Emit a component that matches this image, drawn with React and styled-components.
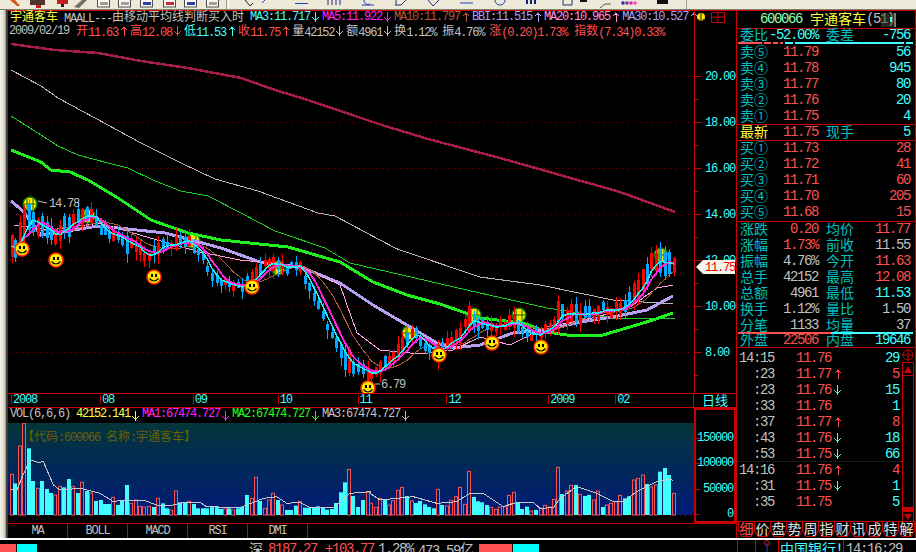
import React from "react";
import styled, { createGlobalStyle } from "styled-components";

const RED = "#c80000";
const UP = "#ff5050";
const CYAN = "#40ffff";
const TEAL = "#00c0c0";
const GRAY = "#c0c0c0";

const GlobalStyle = createGlobalStyle`
  html, body { margin: 0; padding: 0; background: #000; }
  body { width: 916px; height: 552px; overflow: hidden; }
  svg { display: block; }
`;

// ascii is squeezed to the 1:2 cell of the old bitmap font, han keeps full width
const Han = styled.span`
  font-family: "Noto Sans CJK SC", sans-serif;
  letter-spacing: 0;
  position: relative;
  top: -1px;
`;
const Mix = ({ children }) =>
  String(children)
    .split(/([\u2460-\u2473\u4e00-\u9fff\uff01]+)/)
    .map((part, i) => (i % 2 ? <Han key={i}>{part}</Han> : part));

const Page = styled.div`
  width: 916px;
  height: 552px;
  overflow: hidden;
  background: #000;
  font-family: "Liberation Mono", monospace;
  letter-spacing: -1.2px;
  white-space: pre;
`;

const Main = styled.div`
  display: flex;
  height: 528px;
`;

const Rail = styled.div`
  width: 6px;
  background: linear-gradient(90deg, #f4f2e6, #dcd8c4 70%, #8a8878);
  border-right: 1px solid #404040;
`;

const ChartColumn = styled.div`
  width: 728px;
  border-left: 1px solid ${RED};
  border-top: 1px solid ${RED};
`;

const Header = styled.div`
  display: flex;
  height: 28px;
  font-size: 12px;
`;
const HeaderBody = styled.div`
  width: 686px;
`;
const HeaderRow = styled.div`
  display: flex;
  height: ${(p) => p.$h}px;
  line-height: ${(p) => p.$h}px;
  padding-left: ${(p) => p.$pad}px;
`;
const Item = styled.span`
  color: ${(p) => p.$c};
  margin-right: ${(p) => p.$mr || 0}px;
`;
const HeaderTools = styled.div`
  flex: 1;
  border-left: 1px solid ${RED};
  display: flex;
  gap: 3px;
  padding-top: 1px;
`;

const ArrowBox = styled.svg`
  width: 12px;
  height: 12px;
  flex: none;
  color: ${(p) => p.$c};
  align-self: center;
`;
const Arrow = ({ up, c }) => (
  <ArrowBox $c={c} viewBox="0 0 12 12">
    {up ? (
      <path d="M5 1h1v1h1v1h1v1h1v1h-1v-1h-1v7h-1v-7h-1v-0h-1v1h-1v-1h1v-1h1v-1h1z" fill="currentColor" />
    ) : (
      <path d="M5 1h1v7h1v-1h1v-1h1v1h-1v1h-1v1h-1v2h-1v-2h-1v-1h-1v-1h-1v-1h1v1h1v1h1z" fill="currentColor" />
    )}
  </ArrowBox>
);

const PriceCanvas = styled.svg`
  width: 728px;
  height: 354px;
  font-size: 12px;
  letter-spacing: -1.2px;
`;

const DateAxis = styled.div`
  display: flex;
  height: 15px;
  box-sizing: border-box;
  border-top: 1px solid ${RED};
  border-bottom: 1px solid ${RED};
`;
const DateSpacer = styled.div`
  width: 3px;
`;
const DateCell = styled.div`
  width: ${(p) => p.$w}px;
  height: 9px;
  box-sizing: border-box;
  border-left: 1px solid ${RED};
  padding-left: 1px;
  margin-top: 1px;
  font-size: 12px;
  line-height: 11px;
  color: ${CYAN};
`;
const AxisCaption = styled.div`
  width: 42px;
  border-left: 1px solid ${RED};
  text-align: center;
  color: ${CYAN};
  font-size: 13px;
  line-height: 14px;
`;

const LowerRow = styled.div`
  display: flex;
  height: 115px;
`;
const VolumeColumn = styled.div`
  width: 686px;
`;
const VolumeHeader = styled.div`
  display: flex;
  height: 15px;
  line-height: 13px;
  font-size: 12px;
  padding-left: 2px;
`;
const VolumeCanvas = styled.svg`
  width: 686px;
  height: 100px;
`;
const VolumeAxis = styled.div`
  width: 42px;
  box-sizing: border-box;
  height: 115px;
  border: 2px solid ${RED};
  padding-top: 16px;
`;
const VolumeTick = styled.div`
  position: relative;
  height: 25.3px;
  line-height: 25px;
  text-align: right;
  padding-right: 1px;
  font-size: 12px;
  color: ${CYAN};
  &::before {
    content: "";
    position: absolute;
    left: 0;
    top: 12px;
    width: 4px;
    height: 1px;
    background: ${RED};
  }
`;

const TabRow = styled.div`
  display: flex;
  height: 15px;
  box-sizing: border-box;
  border-top: 1px solid ${RED};
`;
const FormulaTab = styled.div`
  width: ${(p) => p.$w}px;
  box-sizing: border-box;
  border-right: 1px solid ${RED};
  text-align: center;
  font-size: 12px;
  line-height: 14px;
  color: ${GRAY};
`;

const Panel = styled.div`
  width: 178px;
  border-left: 1px solid ${RED};
  border-right: 1px solid ${RED};
  border-top: 1px solid ${RED};
  font-size: 14px;
  letter-spacing: -1.4px;
`;
const Title = styled.div`
  display: flex;
  height: 18px;
  box-sizing: border-box;
  border-bottom: 1px solid ${RED};
  padding-left: 23px;
  line-height: 17px;
  position: relative;
`;
const TitleBadge = styled.div`
  position: absolute;
  left: 144px;
  top: 2px;
  width: 15px;
  height: 14px;
  box-sizing: border-box;
  background: rgba(70, 70, 50, 0.55);
  border-right: 2px solid #807868;
  &::after {
    content: "";
    position: absolute;
    right: 2px;
    top: 4px;
    width: 2px;
    height: 5px;
    background: ${CYAN};
  }
`;
const Section = styled.div`
  border-bottom: 1px solid ${RED};
`;
const Row = styled.div`
  display: grid;
  grid-template-columns: 28px 50px 8px 28px 1fr;
  height: ${(p) => p.$h || 16}px;
  line-height: ${(p) => p.$lh || p.$h || 16}px;
  padding: 0 5px 0 3px;
`;
const Cell = styled.span`
  color: ${(p) => p.$c || TEAL};
  text-align: ${(p) => (p.$r ? "right" : "left")};
  grid-column: ${(p) => p.$col};
`;
const BarRow = styled.div`
  display: flex;
  gap: ${(p) => p.$gap || 0}px;
  height: 2px;
  margin: ${(p) => p.$mt || 0}px 2px 0 1px;
  position: relative;
`;
const BarPiece = styled.div`
  width: ${(p) => p.$w}px;
  background: ${(p) => p.$c};
`;

const Trades = styled.div`
  display: flex;
  height: 174px;
  box-sizing: border-box;
  border-bottom: 1px solid ${RED};
`;
const TradeRows = styled.div`
  width: 165px;
  padding-top: 2px;
`;
const TradeRow = styled.div`
  display: grid;
  grid-template-columns: 37px 22px 35px 14px 1fr;
  height: 16px;
  line-height: 16px;
  padding-right: 3px;
  box-sizing: border-box;
  border-bottom: ${(p) => (p.$split ? "1px dotted #a00000" : "none")};
`;
const TradeTime = styled.span`
  color: ${GRAY};
  text-align: right;
`;
const TradePrice = styled.span`
  color: ${UP};
  grid-column: 3;
`;
const TradeArrow = styled.span`
  grid-column: 4;
  display: flex;
  justify-content: center;
`;
const TradeVol = styled.span`
  color: ${(p) => p.$c};
  text-align: right;
  grid-column: 5;
`;
const Scroller = styled.div`
  width: 12px;
  display: flex;
  flex-direction: column;
  padding-top: 1px;
  box-sizing: border-box;
`;
const ScrollTrack = styled.div`
  flex: 1;
  border-left: 1px solid ${RED};
  border-right: 1px solid ${RED};
  border-bottom: 5px solid ${RED};
`;
const ScrollButton = styled.div`
  height: ${(p) => p.$h}px;
  box-sizing: border-box;
  border: 1px solid ${RED};
  border-width: ${(p) => (p.$bottom ? "0 1px 0 1px" : "1px")};
  display: flex;
  align-items: center;
  justify-content: center;
`;

const ChipRow = styled.div`
  display: flex;
  height: 15px;
  padding-left: 1px;
`;
const HEX = "polygon(0 0, 100% 0, 100% 55%, 78% 100%, 22% 100%, 0 55%)";
const Chip = styled.div`
  position: relative;
  width: 17px;
  height: 15px;
  margin-right: -1px;
  background: ${RED};
  clip-path: ${HEX};
  &::before {
    content: "";
    position: absolute;
    inset: 0 1px 1px;
    background: #000;
    clip-path: ${HEX};
  }
`;
const ChipText = styled.span`
  position: relative;
  display: block;
  text-align: center;
  font-size: 14px;
  line-height: 15px;
  color: ${(p) => (p.$on ? UP : "#e0e0e0")};
`;

const WhiteLine = styled.div`
  height: 2px;
  background: #fff;
`;
const StatusBar = styled.div`
  display: flex;
  height: 12px;
  overflow: hidden;
  font-size: 14px;
  line-height: 18px;
  letter-spacing: -1.4px;
`;
const StatusBlock = styled.div`
  width: ${(p) => p.$w}px;
  height: 8px;
  margin: 4px 0 0 ${(p) => p.$ml || 0}px;
  background: ${(p) => p.$c};
`;
const StatusText = styled.span`
  color: ${(p) => p.$c};
  margin-left: ${(p) => p.$ml || 0}px;
`;
const StatusRight = styled.div`
  display: flex;
  margin-left: auto;
  width: 179px;
`;
const StatusCell = styled.div`
  width: ${(p) => p.$w}px;
  box-sizing: border-box;
  border-left: 1px solid ${RED};
  padding-left: ${(p) => p.$pad || 0}px;
  color: ${(p) => p.$c};
  display: flex;
  justify-content: ${(p) => (p.$center ? "center" : "flex-start")};
`;

// one candle per volume bar, x is absolute page px (zoomed reading / 3)
const V1 =
  "35r268 46c295 61r183 73r115 88c190 100c288 115r310 127c288 142c312 154c324 166r330 181r304 193c307 208c282 220r304 235c324 247r292 262c318 274r324 289c348 302c345 314c357 328c357 340r337 355c360 367c345 382c300 394r355 409r345 421r364 433r366 448r364 462c366 475r340 488c355 502c370 514r375 529r318 541c352 555c352 568r349 581c357 595c370 608c370 622c370 635c364 650c364 662c372 675r372 688c370 700r375 715c370 727c365 742c330 755r340 769r277 781c348 796r370 808r345 820r325 835c345 847r360 860c375 874c375 889c362 901r349 914c368 928c368 942c368 955c364 968c368 982c374 996c372 1009c354 1022c322 1036c292 1048r253 1060c333 1075c366 1088c345 1103r322";
const V2 =
  "2r355 18r367 30r340 46c345 58r360 70r347 85r316 97r307 112c333 125r348 139c354 151c348 165c358 178c366 192c370 205r313 217c360 232r363 244r346 259r335 271r307 286r358 298r259 313c336 325c349 337c352 352c360 364r367 379r373 391r366 405r365 418r331 433r322 445c352 457c372 471c365 484r378 499c375 512r370 526r361 539r366 553r343 565r247 577c327 592r318 604r301 619c300 631r328 646c333 658c330 673r345 685r318 700c366 712r360 724r355 737r350 751r331 766c340 778c334 793r285 805r280 820r270 832c297 844r306 859r300 871c260 886c249 898c270 913r325";

const parseBars = (src, offset) =>
  src.split(" ").map((s) => {
    const m = s.match(/(\d+)([rc])(\d+)/);
    return { x: +m[1] / 3 + offset, up: m[2] === "r", h: (390 - +m[3]) / 3 };
  });
const bars = [...parseBars(V1, 0), ...parseBars(V2, 370)];

const TRACK = [
  [12, 250], [20, 240], [26, 215], [36, 225], [44, 230], [56, 235], [66, 225], [80, 215], [92, 215],
  [100, 228], [112, 235], [128, 245], [140, 252], [150, 255], [160, 248], [176, 240], [190, 240],
  [200, 255], [215, 280], [235, 290], [250, 280], [265, 265], [280, 268], [300, 270], [310, 290],
  [320, 310], [335, 345], [345, 360], [360, 372], [375, 375], [385, 365], [400, 350], [410, 330],
  [425, 345], [440, 350], [455, 340], [470, 320], [485, 325], [500, 325], [515, 325], [530, 335],
  [545, 330], [560, 315], [580, 315], [600, 310], [615, 310], [630, 300], [640, 285], [650, 265],
  [660, 258], [675, 265],
];
const at = (x) => {
  for (let i = 1; i < TRACK.length; i++) {
    if (x <= TRACK[i][0]) {
      const [x0, y0] = TRACK[i - 1];
      const [x1, y1] = TRACK[i];
      return y0 + ((y1 - y0) * (x - x0)) / (x1 - x0);
    }
  }
  return TRACK[TRACK.length - 1][1];
};
const noise = (i) => {
  const v = Math.sin(i * 12.9898) * 43758.5453;
  return v - Math.floor(v);
};
const candles = bars.map((b, i) => {
  const mid = Math.round(at(b.x) + (noise(i) - 0.5) * 8);
  const half = Math.round(Math.min(2 + b.h / 4.5, 13));
  return {
    ...b,
    top: mid - half,
    bottom: mid + half,
    high: mid - half - Math.round(noise(i + 300) * 8),
    low: mid + half + Math.round(noise(i + 600) * 9),
    mid,
  };
});
const movingAvg = (n) =>
  candles
    .map((c, i) => {
      const from = Math.max(0, i - n + 1);
      const part = candles.slice(from, i + 1);
      return `${c.x.toFixed(1)},${(part.reduce((s, p) => s + p.mid, 0) / part.length).toFixed(1)}`;
    })
    .join(" ");

const LINES = [
  { c: "#a81c48", w: 2.5, p: "11,44 55,50 98,53 141,61 188,68 241,78 275,90 308,100 355,116 385,126 428,139 500,158 560,175 620,192 675,212" },
  { c: "#b8b8b8", w: 1, p: "11,70 41,86 58,98 95,118 141,143 181,163 215,179 258,191 318,213 335,216 395,248 400,250 480,277 540,285 613,300 673,304" },
  { c: "#20d020", w: 1, p: "11,116 41,135 58,146 78,155 108,163 128,168 155,181 181,191 208,196 241,213 275,231 325,248 350,263 480,293 547,308 613,318 675,318" },
  { c: "#20f020", w: 3, p: "11,150 41,162 51,170 70,172 88,180 118,198 151,220 188,233 221,240 288,247 340,262 373,282 407,295 440,304 480,318 523,323 547,332 567,335 603,335 630,327 653,320 673,313" },
  { c: "#b8a0f0", w: 3, p: "11,201 23,211 41,235 68,231 98,226 128,229 165,233 221,248 260,262 303,268 340,283 373,305 407,325 437,343 453,348 480,345 513,333 547,330 580,322 613,317 647,310 673,296" },
  { c: "#ffa0e0", w: 1, p: "14,225 50,230 100,223 150,238 200,252 240,260 300,266 340,285 357,333 380,350 420,354 453,350 480,337 510,345 547,327 597,317 630,307 657,288 673,285" },
];

const Smiley = ({ x, y, sell }) => (
  <g transform={`translate(${x} ${y})`}>
    <circle r="7" fill="#ffe800" stroke={sell ? "#0a6a0a" : "#ff2800"} strokeWidth="1.5" />
    {sell ? (
      <path d="M-3-5V5M3-5V5M-6 0H6" stroke="#0a6a0a" fill="none" />
    ) : (
      <>
        <rect x="-3" y="-3" width="2" height="3" fill="#000" />
        <rect x="1" y="-3" width="2" height="3" fill="#000" />
        <path d="M-4.5 1.5Q0 6.5 4.5 1.5" stroke="#000" strokeWidth="1.2" fill="none" />
      </>
    )}
  </g>
);

const SELLS = [[30, 204], [88, 216], [193, 241], [278, 268], [409, 333], [474, 315], [519, 315], [661, 255]];
const BUYS = [[22, 249], [56, 260], [154, 277], [252, 287], [368, 388], [439, 355], [492, 343], [541, 347]];

const VOL_MA_1 = "33,312 50,318 65,280 90,225 115,232 130,230 160,300 180,315 240,310 300,325 340,350 370,345 430,345 470,360 520,360 550,352 600,352 620,365 720,368 790,340 830,335 860,355 900,352 930,368 1000,368 1050,325 1110,320";
const VOL_MA_2 = "0,325 30,345 130,335 200,355 260,350 300,325 340,325 400,365 440,352 490,352 510,370 550,368 570,340 620,305 680,325 730,350 760,350 800,320 860,290 900,283 910,287";
const volMa = [VOL_MA_1, VOL_MA_2]
  .map((src, k) =>
    src
      .split(" ")
      .map((pt) => {
        const [x, y] = pt.split(",").map(Number);
        return `${x / 3 + (k ? 370 : 0)},${y / 3 + 385}`;
      })
      .join(" ")
  )
  .join(" ");

const PriceChart = () => (
  <PriceCanvas viewBox="8 39 728 354" fontFamily="Liberation Mono">
    {[76, 122, 168, 214, 260, 306, 352].map((y) => (
      <line key={y} x1="10" x2="694" y1={y + 0.5} y2={y + 0.5} stroke="#900000" strokeDasharray="1 5" />
    ))}
    <line x1="694.5" x2="694.5" y1="39" y2="393" stroke={RED} />
    {[20, 18, 16, 14, 12, 10, 8].map((v, i) => {
      const y = 76 + i * 46;
      return (
        <g key={v}>
          <line x1="694" x2="702" y1={y + 0.5} y2={y + 0.5} stroke={RED} />
          <line x1="694" x2="698" y1={y + 23.5} y2={y + 23.5} stroke={RED} />
          <text x="705" y={y + 4} fill={CYAN}>{v.toFixed(2)}</text>
        </g>
      );
    })}
    {SELLS.map(([x, y]) => <Smiley key={x} x={x} y={y} sell />)}
    {LINES.map((l) => (
      <polyline key={l.c} points={l.p} fill="none" stroke={l.c} strokeWidth={l.w} shapeRendering="crispEdges" />
    ))}
    <polyline points={movingAvg(10)} fill="none" stroke="#b05a3a" shapeRendering="crispEdges" />
    {candles.filter((c) => c.x < 676).map((c, i) => (
      <g key={i} fill={c.up ? "#ff0000" : "#00a8ff"}>
        <rect x={Math.round(c.x)} y={c.high} width="1" height={c.low - c.high} />
        <rect x={Math.round(c.x) - 1} y={c.top} width="3" height={c.bottom - c.top} />
      </g>
    ))}
    <polyline points={movingAvg(5)} fill="none" stroke="#ff20e0" strokeWidth="2" shapeRendering="crispEdges" />
    <polyline points={movingAvg(3)} fill="none" stroke="#20f0f0" strokeWidth="1.5" shapeRendering="crispEdges" />
    {BUYS.map(([x, y]) => <Smiley key={x} x={x} y={y} />)}
    <line x1="38" x2="47" y1="201" y2="203" stroke="#c0c0c0" />
    <text x="49" y="207" fill={GRAY}>14.78</text>
    <line x1="375" x2="380" y1="384" y2="384" stroke="#c0c0c0" />
    <text x="381" y="388" fill={GRAY}>6.79</text>
    <path d="M735 260H703L696 267L703 274H735Z" fill="#f4f4e8" />
    <text x="705" y="271" fill="#f00000">11.75</text>
  </PriceCanvas>
);

const VolumeChart = () => (
  <VolumeCanvas viewBox="8 423 686 100">
    <defs>
      <linearGradient id="volBg" x1="0" x2="0" y1="0" y2="1">
        <stop offset="0" stopColor="#04363a" />
        <stop offset="1" stopColor="#001a78" />
      </linearGradient>
    </defs>
    <rect x="8" y="423" width="686" height="92" fill="url(#volBg)" />
    {candles.map((b, i) =>
      b.up ? (
        <rect key={i} x={Math.round(b.x) - 1.5} y={515 - b.h} width="3" height={b.h} fill="none" stroke="#ff5050" />
      ) : (
        <rect key={i} x={Math.round(b.x) - 2} y={515 - b.h} width="4" height={b.h} fill="#40ffff" />
      )
    )}
    <polyline points={volMa} fill="none" stroke="#c8c8c8" shapeRendering="crispEdges" />
    <text x="22" y="441" fill="#6b6000" fontSize="12" fontFamily="Liberation Mono" letterSpacing="-1.2">
      <tspan fontFamily="Noto Sans CJK SC" letterSpacing="0">【代码</tspan>:600066 <tspan fontFamily="Noto Sans CJK SC" letterSpacing="0">名称</tspan>:<tspan fontFamily="Noto Sans CJK SC" letterSpacing="0">宇通客车】</tspan>
    </text>
    <line x1="670" x2="694" y1="515.5" y2="515.5" stroke="#a00000" strokeDasharray="1 4" />
  </VolumeCanvas>
);

const Toolbar = () => (
  <svg width="916" height="10" viewBox="0 0 916 10">
    <rect width="916" height="10" fill="#ece9d8" />
    <rect y="9" width="916" height="1" fill="#808070" />
    <path d="M10 0h5l5 6h-3z" fill="#d05818" />
    <rect x="30" y="0" width="15" height="5" fill="#503030" />
    <rect x="36" y="5" width="5" height="3" fill="#c02020" />
    <rect x="57" y="0" width="11" height="4" fill="#c02020" />
    <rect x="61" y="4" width="3" height="3" fill="#202020" />
    <path d="M74 7L82 0h5l-8 8z" fill="#707068" />
    {[97, 118, 140, 163, 184, 206].map((x) => (
      <g key={x}>
        <rect x={x + 0.5} y="-2" width="12" height="9" fill="#f8f8f0" stroke="#505050" />
        <rect x={x + 3} y="2" width="8" height="3" fill={x === 163 ? "#c03030" : x === 140 || x === 184 ? "#3040a0" : "#a0a098"} />
      </g>
    ))}
    <rect x="226" y="0" width="1" height="9" fill="#a0a090" />
    <rect x="228" y="0" width="1" height="9" fill="#fff" />
    <path d="M245 0l5 6 3-3" stroke="#202020" fill="none" />
    <path d="M262 3l3-3" stroke="#2040c0" fill="none" />
    <rect x="295" y="3" width="13" height="1" fill="#2040c0" />
    <path d="M328 0v5M332 0v5M336 0v5M340 0v5" stroke="#203080" />
    <path d="M362 5h12M364 0a4 4 0 0 0 6 4" stroke="#2040c0" fill="none" />
    <path d="M395 5h6l5-5M396 0v5" stroke="#203080" fill="none" />
    <path d="M428 0l5 6 6-6" stroke="#203080" fill="none" />
    <path d="M460 3h13" stroke="#2040c0" />
    <circle cx="500" cy="0" r="5" fill="none" stroke="#2040c0" />
    <path d="M527 0v4M531 0v4M535 0v4" stroke="#102070" strokeWidth="2" />
    <path d="M563 0v5h9V0" stroke="#203080" fill="none" />
    <rect x="580" y="0" width="7" height="2" fill="#101010" />
    <path d="M600 8l5-4h6" stroke="#406040" fill="none" />
    {[623, 627, 631, 635].map((x, i) => (
      <circle key={x} cx={x} cy="3" r="1.8" fill={["#2030a0", "#8030a0", "#d030b0", "#ff40c0"][i]} />
    ))}
    <rect x="657" y="0" width="11" height="4" fill="#101010" />
    <rect x="686" y="0" width="1" height="9" fill="#a0a090" />
  </svg>
);

const SELL_LEVELS = [
  ["卖⑤", "11.79", "56"], ["卖④", "11.78", "945"], ["卖③", "11.77", "80"], ["卖②", "11.76", "20"], ["卖①", "11.75", "4"],
];
const BUY_LEVELS = [
  ["买①", "11.73", "28"], ["买②", "11.72", "41"], ["买③", "11.71", "60"], ["买④", "11.70", "205"], ["买⑤", "11.68", "15"],
];
const STATS = [
  ["涨跌", "0.20", UP, "均价", "11.77", UP],
  ["涨幅", "1.73%", UP, "前收", "11.55", GRAY],
  ["振幅", "4.76%", GRAY, "今开", "11.63", UP],
  ["总手", "42152", GRAY, "最高", "12.08", UP],
  ["总额", "4961", GRAY, "最低", "11.53", CYAN],
  ["换手", "1.12%", GRAY, "量比", "1.50", GRAY],
  ["分笔", "1133", GRAY, "均量", "37", GRAY],
];
const TICKS = [
  ["14:15", "11.76", null, "29", CYAN],
  [":23", "11.77", "up", "5", UP],
  [":23", "11.76", "down", "15", CYAN],
  [":33", "11.76", null, "1", CYAN],
  [":37", "11.77", "up", "8", UP],
  [":43", "11.76", "down", "18", CYAN],
  [":53", "11.75", "down", "66", CYAN],
  ["14:16", "11.76", "up", "4", UP],
  [":31", "11.75", "down", "1", CYAN],
  [":35", "11.75", null, "5", CYAN],
];
const DATES = [["2008", 89], ["08", 93], ["09", 85], ["10", 80], ["11", 89], ["12", 102], ["2009", 67], ["02", 78]];
const FORMULAS = [["MA", 60], ["BOLL", 60], ["MACD", 60], ["RSI", 60], ["DMI", 60]];
const CHIPS = ["细", "价", "盘", "势", "周", "指", "财", "讯", "成", "特", "解"];
const RATIO_BAR = [[24, UP], [7, UP], [5, UP], [3, UP], [9, CYAN], [110, CYAN], [7, CYAN]];

const Level = ({ row, volColor, lh }) => (
  <Row $lh={lh}>
    <Cell><Mix>{row[0]}</Mix></Cell>
    <Cell $c={UP} $r>{row[1]}</Cell>
    <Cell $c={volColor} $r $col="5">{row[2]}</Cell>
  </Row>
);

export default function App() {
  return (
    <Page>
      <GlobalStyle />
      <Toolbar />
      <Main>
        <Rail />
        <ChartColumn>
          <Header>
            <HeaderBody>
              <HeaderRow $h={12} $pad={2}>
                <Item $c="#ffff40" $mr={6}><Mix>宇通客车</Mix></Item>
                <Item $c={GRAY} $mr={6}><Mix>MAALL---由移动平均线判断买入时</Mix></Item>
                <Item $c={CYAN}>MA3:11.717</Item><Arrow c={CYAN} />
                <Item $c="#ff20ff">MA5:11.922</Item><Arrow c="#ff20ff" />
                <Item $c="#b05a40">MA10:11.797</Item><Arrow up c="#b05a40" />
                <Item $c="#a8a0ff">BBI:11.515</Item><Arrow up c="#a8a0ff" />
                <Item $c="#ff90e0">MA20:10.965</Item><Arrow up c="#ff90e0" />
                <Item $c="#a8a0ff">MA30:10.527</Item><Arrow up c="#a8a0ff" />
              </HeaderRow>
              <HeaderRow $h={16} $pad={1}>
                <Item $c={GRAY} $mr={7}>2009/02/19</Item>
                <Item $c={UP}><Mix>开11.63</Mix></Item><Arrow up c={UP} />
                <Item $c={UP}><Mix>高12.08</Mix></Item><Arrow c={UP} />
                <Item $c={CYAN}><Mix>低11.53</Mix></Item><Arrow up c={CYAN} />
                <Item $c={UP}><Mix>收11.75</Mix></Item><Arrow up c={UP} />
                <Item $c={GRAY}><Mix>量42152</Mix></Item><Arrow c={GRAY} />
                <Item $c={GRAY}><Mix>额4961</Mix></Item><Arrow c={GRAY} />
                <Item $c={GRAY} $mr={6}><Mix>换1.12%</Mix></Item>
                <Item $c={GRAY} $mr={5}><Mix>振4.76%</Mix></Item>
                <Item $c={UP} $mr={7}><Mix>涨(0.20)1.73%</Mix></Item>
                <Item $c={UP}><Mix>指数(7.34)0.33%</Mix></Item>
              </HeaderRow>
            </HeaderBody>
            <HeaderTools>
              <svg width="12" height="12" viewBox="0 0 12 12">
                <circle cx="6" cy="5" r="4" fill="#ffe800" />
                <path d="M6 0v9M3 7l3 4 3-4" stroke="#101000" fill="none" />
              </svg>
              <svg width="14" height="11" viewBox="0 0 14 11" style={{ marginLeft: 1 }}>
                <path d="M.5.5h13v10H.5zM7 .5v10M.5 5h13" stroke={RED} fill="none" />
              </svg>
            </HeaderTools>
          </Header>
          <PriceChart />
          <DateAxis>
            <DateSpacer />
            {DATES.map(([label, w]) => <DateCell key={label} $w={w}>{label}</DateCell>)}
            <AxisCaption><Mix>日线</Mix></AxisCaption>
          </DateAxis>
          <LowerRow>
            <VolumeColumn>
              <VolumeHeader>
                <Item $c={GRAY} $mr={6}>VOL(6,6,6)</Item>
                <Item $c="#ffff40">42152.141</Item><Arrow c="#ffff40" />
                <Item $c="#ff20ff">MA1:67474.727</Item><Arrow c="#ff20ff" />
                <Item $c="#20ff20">MA2:67474.727</Item><Arrow c="#20ff20" />
                <Item $c={GRAY}>MA3:67474.727</Item><Arrow c={GRAY} />
              </VolumeHeader>
              <VolumeChart />
            </VolumeColumn>
            <VolumeAxis>
              {["150000", "100000", "50000", "0"].map((t) => <VolumeTick key={t}>{t}</VolumeTick>)}
            </VolumeAxis>
          </LowerRow>
          <TabRow>
            {FORMULAS.map(([label, w]) => <FormulaTab key={label} $w={w}>{label}</FormulaTab>)}
          </TabRow>
        </ChartColumn>
        <Panel>
          <Title>
            <Item $c="#90ffb0" $mr={8}>600066</Item>
            <Item $c="#ffff40"><Mix>宇通客车</Mix></Item>
            <Item $c={GRAY}>(51)</Item>
            <TitleBadge />
          </Title>
          <Row $h={13}>
            <Cell><Mix>委比</Mix></Cell>
            <Cell $c={CYAN} $r>-52.00%</Cell>
            <Cell $col="4"><Mix>委差</Mix></Cell>
            <Cell $c={CYAN} $r>-756</Cell>
          </Row>
          <BarRow $gap={2}>
            {RATIO_BAR.map(([w, c], i) => <BarPiece key={i} $w={w} $c={c} />)}
          </BarRow>
          <Section>
            {SELL_LEVELS.map((row) => <Level key={row[0]} row={row} volColor={CYAN} />)}
          </Section>
          <Section>
            <Row $h={15}>
              <Cell $c="#ffff40"><Mix>最新</Mix></Cell>
              <Cell $c={UP} $r>11.75</Cell>
              <Cell $col="4"><Mix>现手</Mix></Cell>
              <Cell $c={CYAN} $r>5</Cell>
            </Row>
          </Section>
          <Section>
            {BUY_LEVELS.map((row) => <Level key={row[0]} row={row} volColor={UP} lh={14} />)}
          </Section>
          <Section>
            {STATS.map((s) => (
              <Row key={s[0]} $lh={14}>
                <Cell><Mix>{s[0]}</Mix></Cell>
                <Cell $c={s[2]} $r>{s[1]}</Cell>
                <Cell $col="4"><Mix>{s[3]}</Mix></Cell>
                <Cell $c={s[5]} $r>{s[4]}</Cell>
              </Row>
            ))}
            <BarRow $mt={-2}>
              <BarPiece $w={93} $c={UP} />
              <BarPiece $w={82} $c={CYAN} />
            </BarRow>
            <Row $h={13}>
              <Cell><Mix>外盘</Mix></Cell>
              <Cell $c={UP} $r>22506</Cell>
              <Cell $col="4"><Mix>内盘</Mix></Cell>
              <Cell $c={CYAN} $r>19646</Cell>
            </Row>
          </Section>
          <Trades>
            <TradeRows>
              {TICKS.map((t, i) => (
                <TradeRow key={i} $split={i === 6}>
                  <TradeTime>{t[0]}</TradeTime>
                  <TradePrice>{t[1]}</TradePrice>
                  <TradeArrow>
                    {t[2] && <Arrow up={t[2] === "up"} c={t[2] === "up" ? UP : CYAN} />}
                  </TradeArrow>
                  <TradeVol $c={t[4]}>{t[3]}</TradeVol>
                </TradeRow>
              ))}
            </TradeRows>
            <Scroller>
              <svg width="12" height="13" viewBox="0 0 12 13">
                <circle cx="6" cy="6" r="5" fill="none" stroke={RED} />
                <path d="M6 0v12M0 6h12" stroke={RED} />
              </svg>
              <ScrollButton $h={14}>
                <svg width="8" height="7" viewBox="0 0 8 7"><path d="M4 0L8 7H0z" fill={RED} /></svg>
              </ScrollButton>
              <ScrollTrack />
              <ScrollButton $h={9} $bottom>
                <svg width="8" height="6" viewBox="0 0 8 6"><path d="M0 0H8L4 6z" fill={RED} /></svg>
              </ScrollButton>
            </Scroller>
          </Trades>
          <ChipRow>
            {CHIPS.map((c, i) => (
              <Chip key={c}>
                <ChipText $on={i === 0}><Mix>{c}</Mix></ChipText>
              </Chip>
            ))}
          </ChipRow>
        </Panel>
      </Main>
      <WhiteLine />
      <StatusBar>
        <StatusBlock $w={16} $c={UP} />
        <StatusBlock $w={20} $ml={1} $c="#00ffff" />
        <StatusText $c={GRAY} $ml={212}><Mix>深</Mix></StatusText>
        <StatusText $c={UP} $ml={5}>8187.27</StatusText>
        <StatusText $c={UP} $ml={8}>+103.77</StatusText>
        <StatusText $c={GRAY} $ml={4}>1.28%</StatusText>
        <StatusText $c={GRAY} $ml={5}><Mix>473.59亿</Mix></StatusText>
        <StatusBlock $w={33} $ml={5} $c={UP} />
        <StatusBlock $w={26} $ml={1} $c="#00ffff" />
        <StatusRight>
          <StatusCell $w={18} />
          <StatusCell $w={23} $center>
            <svg width="8" height="12" viewBox="0 0 8 12">
              <circle cx="4" cy="3" r="2.5" fill="none" stroke="#d02020" />
              <path d="M4 3v9" stroke="#2040c0" />
            </svg>
          </StatusCell>
          <StatusCell $w={65} $pad={1} $c={CYAN}><Mix>中国银行！</Mix></StatusCell>
          <StatusCell $w={73} $pad={2} $c={GRAY}>14:16:29</StatusCell>
        </StatusRight>
      </StatusBar>
    </Page>
  );
}
